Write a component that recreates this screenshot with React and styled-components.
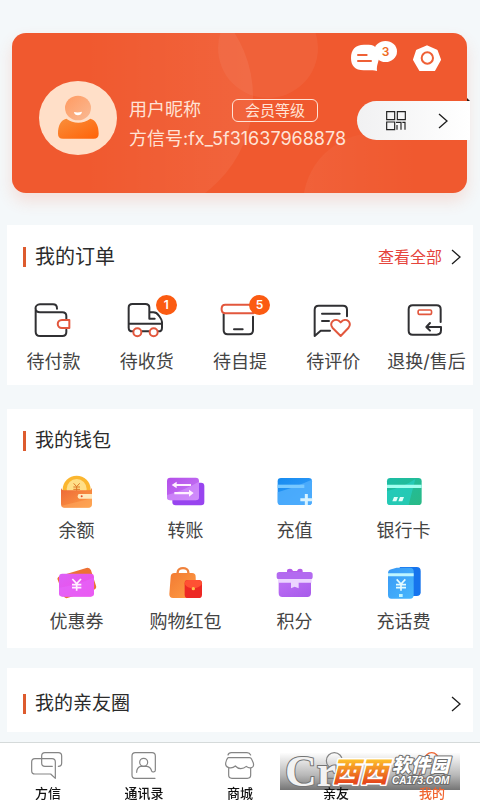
import React from "react";
import styled, { createGlobalStyle } from "styled-components";

const GlobalStyle = createGlobalStyle`
  *, *::before, *::after { box-sizing: border-box; }
  body {
    margin: 0;
    background: #f4f8fa;
    color: #333;
    font-family: "Inter", "Noto Sans CJK SC", sans-serif;
  }
  button {
    margin: 0;
    padding: 0;
    border: 0;
    background: none;
    color: inherit;
    font: inherit;
    cursor: pointer;
  }
  a { color: inherit; text-decoration: none; }
  h2 { margin: 0; }
  svg { display: block; flex: none; }
`;

const Page = styled.div`
  display: flex;
  flex-direction: column;
  min-height: 100vh;
`;

const Content = styled.main`
  flex: 1;
  padding: 33px 7px 10px;
`;

const Hero = styled.section`
  position: relative;
  z-index: 0;
  margin: 0 6px 32px 5px;
  padding: 8px 0 38px;
  border-radius: 14px;
  color: #ffe3d6;
  background: #f0592f;
  box-shadow: 0 8px 16px rgba(240, 92, 51, 0.16);
`;

const HeroBubbles = styled.svg`
  position: absolute;
  z-index: -1;
  top: 0;
  left: 0;
  width: 100%;
  height: 100%;
  border-radius: 14px;
`;

const HeroActions = styled.div`
  display: flex;
  justify-content: flex-end;
  align-items: flex-end;
  gap: 16px;
  padding-right: 26px;
`;

const IconButton = styled.button`
  position: relative;
  display: block;
`;

const MessageCount = styled.span`
  position: absolute;
  top: 0;
  right: 0;
  width: 23px;
  height: 21px;
  border-radius: 50%;
  background: #fff;
  color: #ee6a22;
  font-size: 12px;
  line-height: 21px;
  font-weight: 600;
  text-align: center;
`;

const Profile = styled.div`
  display: flex;
  align-items: flex-start;
  gap: 12px;
  margin: 10px -3px 0 27px;
`;

const ProfileInfo = styled.div`
  flex: 1;
  min-width: 0;
  padding-top: 17px;
  font-size: 18px;
  line-height: 24px;
  white-space: nowrap;
`;

const NameRow = styled.div`
  display: flex;
  align-items: center;
  gap: 31px;
  margin-bottom: 5px;
`;

const Level = styled.span`
  padding: 0 12px;
  border: 1px solid #ffe3d6;
  border-radius: 6px;
  font-size: 15px;
  line-height: 21px;
`;

const CodeButton = styled.button`
  position: relative;
  display: flex;
  align-items: center;
  justify-content: space-between;
  flex: none;
  width: 113px;
  height: 39px;
  margin-top: 20px;
  padding: 0 22px 0 29px;
  border-radius: 20px 0 0 20px;
  background: linear-gradient(90deg, #f1f1f2, #fff);
  color: #111;

  &::before {
    content: "";
    position: absolute;
    right: 0;
    bottom: 100%;
    border: solid transparent;
    border-width: 3px 0 0 3px;
    border-left-color: #2a1712;
  }
`;

const Panel = styled.section`
  margin-bottom: ${(p) => p.$after || 0}px;
  padding: ${(p) => p.$pad};
  background: #fff;
`;

const PanelHeader = styled.header`
  display: flex;
  align-items: center;
  justify-content: space-between;
  height: 26px;
  padding: 0 12px 0 16px;
`;

const PanelTitle = styled.h2`
  display: flex;
  align-items: center;
  gap: 9px;
  color: #2b2b2b;
  font-size: ${(p) => p.$size}px;
  line-height: 26px;
  font-weight: 400;

  &::before {
    content: "";
    width: 3px;
    height: 20px;
    background: #dd5b2e;
  }
`;

const MoreLink = styled.a`
  display: flex;
  align-items: center;
  gap: 9px;
  color: #e5443c;
  font-size: 16px;
  line-height: 24px;
`;

const OrderGrid = styled.div`
  display: grid;
  grid-template-columns: repeat(5, 1fr);
  margin-top: 31px;
`;

const WalletGrid = styled.div`
  display: grid;
  grid-template-columns: repeat(4, 1fr);
  row-gap: 22px;
  margin: 20px 15px 0;
`;

const Entry = styled.button`
  display: flex;
  flex-direction: column;
  align-items: center;
  gap: ${(p) => p.$gap}px;
  min-width: 0;
  color: #444;
  font-size: 18px;
  line-height: 24px;
  white-space: nowrap;
`;

const EntryIcon = styled.span`
  position: relative;
`;

const Badge = styled.span`
  position: absolute;
  top: -6px;
  left: 29px;
  width: 21px;
  height: 20px;
  border-radius: 50%;
  background: #fb5b12;
  color: #fff;
  font-size: 12px;
  line-height: 20px;
  font-weight: 600;
  text-align: center;
`;

const TabBar = styled.nav`
  position: sticky;
  bottom: 0;
  display: grid;
  grid-template-columns: repeat(5, 1fr);
  border-top: 1px solid #d5dada;
  background: #fff;
`;

const Tab = styled.a`
  display: flex;
  flex-direction: column;
  align-items: center;
  gap: 5px;
  padding-top: 8px;
  color: ${(p) => (p.$active ? "#f0622d" : "#111")};
  font-size: 13px;
  line-height: 14px;
  font-weight: 500;
`;

const TabLabel = styled.span`
  position: relative;
  z-index: 2;
`;

const Watermark = styled.div`
  position: absolute;
  z-index: 1;
  right: 20px;
  bottom: 10px;
  background: linear-gradient(rgba(150, 150, 150, 0.02), rgba(125, 125, 125, 0.55) 60%, rgba(105, 105, 105, 0.92));
  pointer-events: none;

  svg { overflow: visible; }
`;

const Chevron = () => (
  <svg width="10" height="16" viewBox="0 0 10 16" fill="none" stroke="#1c1c1c" strokeWidth="1.3" aria-hidden="true">
    <path d="M1 1l8 7-8 7" />
  </svg>
);

const Bubbles = () => (
  <HeroBubbles aria-hidden="true">
    <defs>
      <linearGradient id="bubble" x1="0" y1="0" x2="1" y2="0">
        <stop offset="0.3" stopColor="#fff" stopOpacity="0" />
        <stop offset="1" stopColor="#fff" stopOpacity="0.07" />
      </linearGradient>
      <linearGradient id="bubbleLow" x1="0" y1="0" x2="1" y2="0">
        <stop offset="0" stopColor="#fff" stopOpacity="0.05" />
        <stop offset="0.8" stopColor="#fff" stopOpacity="0" />
      </linearGradient>
    </defs>
    <circle cx="121" cy="64" r="120" fill="url(#bubble)" />
    <circle cx="256" cy="15" r="50" fill="#fff" fillOpacity="0.05" />
    <circle cx="363" cy="172" r="72" fill="url(#bubbleLow)" />
  </HeroBubbles>
);

const MessageIcon = () => (
  <svg width="46" height="30" viewBox="333 62 138 90" aria-hidden="true">
    <path fill="#fff" d="M372 73h14c23 0 31 17 31 36 0 16-8 23-6 43-8-3-14-2-22-2h-18c-26 0-38-14-38-37 0-25 13-40 39-40z" />
    <path stroke="#ef6036" strokeWidth="6" strokeLinecap="round" d="M354 104h26M354 122h39" />
  </svg>
);

const SettingsIcon = () => (
  <svg width="28" height="26" viewBox="519 74 84 78" aria-hidden="true">
    <path fill="#fff" stroke="#fff" strokeWidth="6" strokeLinejoin="round" d="M561 78l29 13 10 27-17 31h-43l-18-31 9-27z" />
    <circle cx="562" cy="113" r="17" fill="none" stroke="#ef6036" strokeWidth="6" />
  </svg>
);

const Avatar = () => (
  <svg width="78" height="74" viewBox="115 184 234 222" role="img" aria-label="头像">
    <defs>
      <linearGradient id="head" x1="0" y1="0" x2="1" y2="1">
        <stop offset="0" stopColor="#ff9a61" />
        <stop offset="1" stopColor="#f9ba94" />
      </linearGradient>
      <linearGradient id="torso" x1="0" y1="0" x2="1" y2="1">
        <stop offset="0" stopColor="#f98f3c" />
        <stop offset="1" stopColor="#ff6207" />
      </linearGradient>
    </defs>
    <ellipse cx="232" cy="295" rx="117" ry="111" fill="#ffdfc8" />
    <path fill="url(#torso)" d="M197 297c22 16 50 16 72 0 17 4 25 22 25 45 0 10-5 15-15 15h-92c-10 0-15-5-15-15 0-24 8-41 25-45z" />
    <ellipse cx="232" cy="265" rx="39" ry="37" fill="url(#head)" />
    <path fill="#fff" d="M220 277q12 3 24-1c-1 14-23 14-24 1z" />
  </svg>
);

const QrIcon = () => (
  <svg width="20" height="20" viewBox="437 271 60 60" fill="none" stroke="#222" strokeWidth="3.5" aria-hidden="true">
    <path d="M439 273h24v24h-24zM471 273h24v24h-24zM439 304h24v23h-24zM467 305h15v22M470 313v14M494 303v24M486 305h8" />
  </svg>
);

const OrderSvg = ({ box, children }) => (
  <svg width="40" height="38" viewBox={box} fill="none" stroke="#303033" strokeWidth="6" strokeLinecap="round" strokeLinejoin="round" aria-hidden="true">
    {children}
  </svg>
);

const RED = "#e2573d";

const PayIcon = () => (
  <OrderSvg box="101 228 120 114">
    <path d="M170 251c0-9-4-13-12-13h-39c-18 0-18 24 0 24h67c9 0 12 4 12 11v8M198 314v7c0 8-4 12-12 12h-66c-9 0-14-5-14-13v-70" />
    <path stroke={RED} d="M207 285h-22c-17 0-17 24 0 24h10M207 285v24h-10" />
  </OrderSvg>
);

const TruckIcon = () => (
  <OrderSvg box="381 228 120 114">
    <path d="M397 319c-8 0-11-4-11-11v-60c0-8 4-11 11-11h39c8 0 12 4 12 11v33h16M386 296h100M448 262h12c8 0 12 3 16 9 5 7 10 12 10 20v17c0 7-3 11-10 11M426 319h20" />
    <g stroke={RED} fill="#fff">
      <circle cx="412" cy="322" r="12" />
      <circle cx="461" cy="322" r="12" />
    </g>
  </OrderSvg>
);

const PickupIcon = () => (
  <OrderSvg box="60 33 120 114">
    <path d="M71 72v49c0 8 4 12 12 12h64c8 0 12-4 12-12V80M102 118h26" />
    <path stroke={RED} d="M160 44H76c-15 0-15 26 0 26h84z" />
  </OrderSvg>
);

const ReviewIcon = () => (
  <OrderSvg box="219 228 120 114">
    <path d="M321 274v-20c0-8-4-12-12-12h-73c-8 0-12 4-12 12v79l18-16h28M246 266h53M246 288h21" />
    <path stroke={RED} d="M302 333l-24-24c-14-15 8-35 24-17 16-18 37 2 23 17z" />
  </OrderSvg>
);

const ReturnIcon = () => (
  <OrderSvg box="499 228 120 114">
    <path d="M603 291v-38c0-8-4-12-12-12h-72c-8 0-12 4-12 12v64c0 8 4 12 12 12h72c9 0 13-5 13-13v-10h-42M571 294l-11 12 11 11" />
    <path stroke={RED} strokeWidth="5" d="M539 255h33c5 0 5 13 0 13h-33c-5 0-5-13 0-13z" />
  </OrderSvg>
);

const WalletSvg = ({ box, id, from, to, children }) => (
  <svg width="40" height="36" viewBox={box} aria-hidden="true">
    <defs>
      <linearGradient id={id} x1="0" y1="0" x2="1" y2="1">
        <stop offset="0" stopColor={from} />
        <stop offset="1" stopColor={to} />
      </linearGradient>
    </defs>
    {children}
  </svg>
);

const BalanceIcon = () => (
  <WalletSvg box="169 207 120 108" id="balance" from="#ec6738" to="#ffa044">
    <circle cx="228" cy="254" r="42" fill="#fbb62f" />
    <circle cx="228" cy="252" r="30" fill="#ffdf88" />
    <path d="M219 235l9 10 9-10M228 245v16M218 246h20M218 253h20" fill="none" stroke="#dc7726" strokeWidth="3" />
    <path fill="url(#balance)" d="M181 248q2 8 11 8h72q8 0 10-8v49q0 11-11 11h-71q-11 0-11-11z" />
    <path fill="#ffb067" opacity=".45" d="M181 303q60-15 93-23v17q0 11-11 11h-71q-8 0-11-5z" />
    <path fill="#ffe9bd" d="M236 267h38v14h-38q-5 0-5-7t5-7z" />
    <circle cx="243" cy="274" r="3" fill="#e34a2c" />
  </WalletSvg>
);

const TransferIcon = () => (
  <WalletSvg box="496 207 120 108" id="transfer" from="#b34ee9" to="#c77bf6">
    <rect x="515" y="233" width="96" height="68" rx="10" fill="#9844ef" />
    <rect x="499" y="218" width="96" height="68" rx="10" fill="url(#transfer)" />
    <path fill="#d79bff" opacity=".55" d="M499 270q46-12 96-40v46q0 10-10 10h-76q-10 0-10-10z" />
    <path fill="#fff0ff" d="M513 240l15-10v7h43v6h-43v7zM579 264l-14-10v7h-44v7h44v7z" />
  </WalletSvg>
);

const RechargeIcon = () => (
  <WalletSvg box="103 207 120 108" id="recharge" from="#168bf0" to="#379dfa">
    <rect x="111" y="219" width="103" height="81" rx="10" fill="url(#recharge)" />
    <path fill="#56b1fd" opacity=".75" d="M111 262q54-16 103-38v66q0 10-10 10h-83q-10 0-10-10z" />
    <path fill="#78c8ff" d="M111 239h80v10h-80z" />
    <path stroke="#d9f3ff" strokeWidth="9" d="M179 284h36M197 267v33" />
  </WalletSvg>
);

const BankIcon = () => (
  <WalletSvg box="430 207 120 108" id="bank" from="#1bbda6" to="#2aba86">
    <rect x="439" y="219" width="104" height="81" rx="10" fill="url(#bank)" />
    <path fill="#27d6d0" opacity=".55" d="M439 258q50-12 85-36l-20 78h-55q-10 0-10-10z" />
    <path fill="#a3fff0" d="M439 239h104v10H439z" />
    <path fill="#dffff9" d="M460 276h12l-5 13h-12zM478 276h12l-5 13h-12z" />
  </WalletSvg>
);

const CouponIcon = () => (
  <WalletSvg box="169 60 120 108" id="coupon" from="#dc60f6" to="#f24be6">
    <path fill="#ed7135" d="M170 101q1-5 7-8l80-24q10-3 14 7l15 46q3 8-6 12l-80 25q-8 2-11-6z" />
    <rect x="175" y="86" width="105" height="69" rx="10" fill="url(#coupon)" />
    <path fill="#e36afe" opacity=".5" d="M175 128q60-9 105-31v48q0 10-10 10h-85q-10 0-10-10z" />
    <path d="M215 102l13 14 13-14M228 116v21M214 119h28M214 128h28" fill="none" stroke="#fff0ff" strokeWidth="5" />
  </WalletSvg>
);

const PacketIcon = () => (
  <WalletSvg box="496 60 120 108" id="packet" from="#f27a32" to="#ff9e46">
    <path fill="none" stroke="#f0823c" strokeWidth="7" d="M531 92V82c0-17 32-17 32 0v10" />
    <path fill="url(#packet)" d="M521 84h53q11 0 11 11l2 64h-70q-11 0-11-11l4-53q1-11 11-11z" />
    <rect x="552" y="105" width="52" height="54" rx="10" fill="#ed2824" />
    <path fill="#ff5133" d="M552 117q0-12 12-12h28q12 0 12 12-10 13-27 13t-25-13z" />
    <circle cx="578" cy="131" r="5" fill="#ffc34e" />
  </WalletSvg>
);

const PointsIcon = () => (
  <WalletSvg box="103 60 120 108" id="points" from="#bd6df5" to="#a75cea">
    <path fill="#b45de8" d="M139 82v-4q0-7 9-7 7 0 9 7h12q2-7 9-7 8 0 8 7v4z" />
    <path fill="url(#points)" d="M114 111h97v33q0 12-11 12h-75q-11 0-11-12z" />
    <rect x="108" y="81" width="108" height="22" rx="8" fill="#b36af0" />
    <path fill="#ecd4ff" d="M112 103h101v10h-39v17l-12-5-11 5v-17h-39z" />
  </WalletSvg>
);

const PhoneIcon = () => (
  <WalletSvg box="430 60 120 108" id="phone" from="#3898f5" to="#47b7fd">
    <path fill="#1674ed" d="M477 66h51q12 0 12 12v64q0 11-12 11h-38z" />
    <path fill="url(#phone)" d="M442 85q0-10 10-12l16-5h40q11 0 11 11v71q0 11-11 11h-56q-10 0-10-11z" />
    <path fill="#bff5ff" d="M442 85h77v9h-77zM475 147h11v9h-11z" />
    <path d="M468 103l13 14 13-14M481 117v20M466 119h30M466 128h30" fill="none" stroke="#e4fbff" strokeWidth="5" />
  </WalletSvg>
);

const TabSvg = ({ box, color = "#858585", children }) => (
  <svg width="34" height="30" viewBox={box} fill="none" stroke={color} strokeWidth="3.6" strokeLinecap="round" strokeLinejoin="round" aria-hidden="true">
    {children}
  </svg>
);

const ChatTabIcon = () => (
  <TabSvg box="93 258 102 90">
    <path d="M166 340l-14-13h-47c-7 0-10-4-10-10v-26c0-6 4-10 10-10h51c7 0 10 4 10 10z" />
    <path d="M157 304h-22c-7 0-10-4-10-10v-21c0-6 4-10 10-10h40c7 0 10 4 10 10v21c0 6-4 10-10 10" />
  </TabSvg>
);

const ContactsTabIcon = () => (
  <TabSvg box="381 258 102 90">
    <path d="M465 340h-60c-6 0-9-4-9-10v-57c0-6 4-10 10-10h50c7 0 10 4 10 10v43c0 5-9 7-11 2-3-10-8-13-14-14h-20c-7 3-11 9-11 18" />
    <circle cx="431" cy="292" r="12" />
  </TabSvg>
);

const MallTabIcon = () => (
  <TabSvg box="669 258 102 90">
    <path d="M684 270q2-7 10-7h47q8 0 11 7M684 278h64q5 0 7 5l5 11c4 15-11 19-21 10-10 9-24 9-33-1-12 11-31 5-29-9 1-8 2-12 7-16M686 310v21c0 6 4 9 10 9h46c7 0 10-4 10-9v-21" />
  </TabSvg>
);

const FriendsTabIcon = () => (
  <TabSvg box="237 258 102 90">
    <circle cx="283" cy="287" r="24" />
    <path d="M244 340c0-18 15-29 39-29s39 11 39 29z" />
  </TabSvg>
);

const MineTabIcon = () => (
  <TabSvg box="525 258 102 90" color="#f0622d">
    <circle cx="575" cy="284" r="21" />
    <path d="M536 340c0-22 15-35 39-35s39 13 39 35z" />
  </TabSvg>
);

const WatermarkLogo = () => (
  <svg width="180" height="37" viewBox="0 0 180 37" role="img" aria-label="西西软件园 CA173.COM">
    <defs>
      <linearGradient id="gold" x1="0" y1="0" x2="0" y2="1">
        <stop offset="0.2" stopColor="#ffc72b" />
        <stop offset="0.8" stopColor="#e5491c" />
      </linearGradient>
    </defs>
    <text x="5" y="33" fontSize="44" fontWeight="700" fill="#f2f2f2" stroke="#747474" strokeWidth="2" paintOrder="stroke" fontFamily="Liberation Serif, serif">Cr</text>
    <g fontFamily="Noto Sans CJK SC, sans-serif" fontStyle="italic" fontWeight="900" paintOrder="stroke" strokeLinejoin="round">
      <text x="52" y="29" fontSize="28" fill="url(#gold)" stroke="#fff" strokeWidth="3">西西</text>
      <text x="112" y="19" fontSize="19" fill="#fff" stroke="#6c6c6c" strokeWidth="2">软件园</text>
    </g>
    <text x="112" y="31" fontSize="10" fontFamily="Liberation Sans, sans-serif" fontStyle="italic" fontWeight="700" fill="#fff" stroke="#6c6c6c" strokeWidth="2" paintOrder="stroke">CA173.COM</text>
  </svg>
);

const orders = [
  { label: "待付款", Icon: PayIcon },
  { label: "待收货", Icon: TruckIcon, count: 1 },
  { label: "待自提", Icon: PickupIcon, count: 5 },
  { label: "待评价", Icon: ReviewIcon },
  { label: "退换/售后", Icon: ReturnIcon },
];

const wallet = [
  { label: "余额", Icon: BalanceIcon },
  { label: "转账", Icon: TransferIcon },
  { label: "充值", Icon: RechargeIcon },
  { label: "银行卡", Icon: BankIcon },
  { label: "优惠券", Icon: CouponIcon },
  { label: "购物红包", Icon: PacketIcon },
  { label: "积分", Icon: PointsIcon },
  { label: "充话费", Icon: PhoneIcon },
];

const tabs = [
  { label: "方信", Icon: ChatTabIcon },
  { label: "通讯录", Icon: ContactsTabIcon },
  { label: "商城", Icon: MallTabIcon },
  { label: "亲友", Icon: FriendsTabIcon },
  { label: "我的", Icon: MineTabIcon, active: true },
];

export default function App() {
  return (
    <Page>
      <GlobalStyle />
      <Content>
        <Hero>
          <Bubbles />
          <HeroActions>
            <IconButton aria-label="消息">
              <MessageIcon />
              <MessageCount>3</MessageCount>
            </IconButton>
            <IconButton aria-label="设置">
              <SettingsIcon />
            </IconButton>
          </HeroActions>
          <Profile>
            <Avatar />
            <ProfileInfo>
              <NameRow>
                <span>用户昵称</span>
                <Level>会员等级</Level>
              </NameRow>
              <div>方信号:fx_5f31637968878</div>
            </ProfileInfo>
            <CodeButton aria-label="二维码">
              <QrIcon />
              <Chevron />
            </CodeButton>
          </Profile>
        </Hero>

        <Panel $pad="19px 0 11px" $after={24}>
          <PanelHeader>
            <PanelTitle $size={20}>我的订单</PanelTitle>
            <MoreLink href="#orders">
              查看全部
              <Chevron />
            </MoreLink>
          </PanelHeader>
          <OrderGrid>
            {orders.map(({ label, Icon, count }) => (
              <Entry key={label} $gap={11}>
                <EntryIcon>
                  <Icon />
                  {count && <Badge>{count}</Badge>}
                </EntryIcon>
                {label}
              </Entry>
            ))}
          </OrderGrid>
        </Panel>

        <Panel $pad="19px 0 14px" $after={20}>
          <PanelHeader>
            <PanelTitle $size={19}>我的钱包</PanelTitle>
          </PanelHeader>
          <WalletGrid>
            {wallet.map(({ label, Icon }) => (
              <Entry key={label} $gap={9}>
                <Icon />
                {label}
              </Entry>
            ))}
          </WalletGrid>
        </Panel>

        <Panel $pad="23px 0 15px">
          <PanelHeader>
            <PanelTitle $size={19}>我的亲友圈</PanelTitle>
            <MoreLink href="#circle" aria-label="我的亲友圈">
              <Chevron />
            </MoreLink>
          </PanelHeader>
        </Panel>
      </Content>

      <TabBar>
        {tabs.map(({ label, Icon, active }) => (
          <Tab key={label} href={"#" + label} $active={active} aria-current={active ? "page" : undefined}>
            <Icon />
            <TabLabel>{label}</TabLabel>
          </Tab>
        ))}
        <Watermark>
          <WatermarkLogo />
        </Watermark>
      </TabBar>
    </Page>
  );
}
